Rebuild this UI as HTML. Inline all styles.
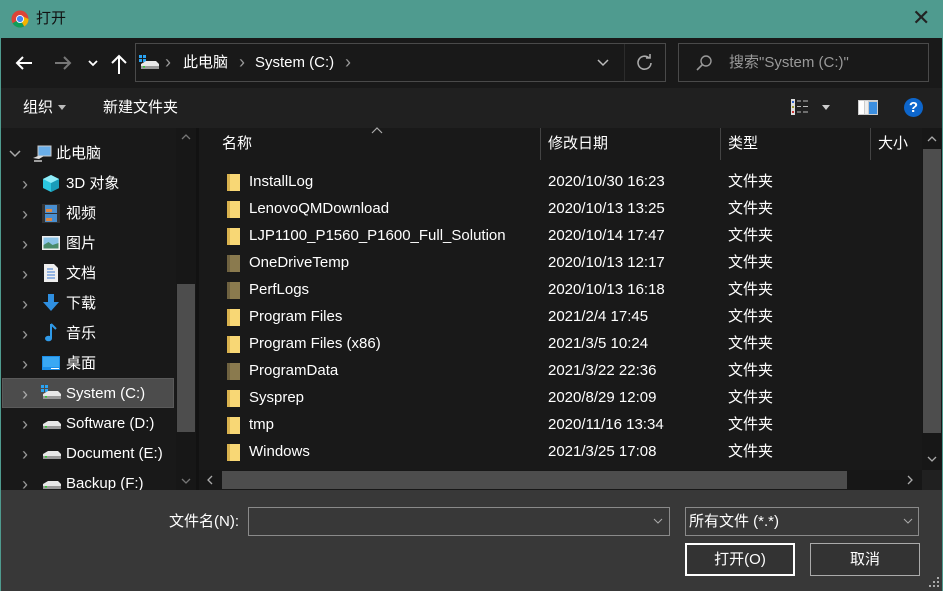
<!DOCTYPE html>
<html><head><meta charset="utf-8"><style>
*{margin:0;padding:0;box-sizing:border-box}
body{width:943px;height:591px;overflow:hidden;background:#191919;font-family:"Liberation Sans","Noto Sans CJK SC",sans-serif;color:#fff;font-size:15px;position:relative}
.a{position:absolute;white-space:nowrap}
.t{line-height:22px}
.cv{color:#999;font-size:18px;line-height:20px}
</style></head><body>
<div class="a" style="left:0;top:0;width:943px;height:38px;background:#4f9b8f"></div>
<div class="a" style="left:0;top:38px;width:1px;height:553px;background:#4f9b8f"></div>
<div class="a" style="left:942px;top:38px;width:1px;height:553px;background:#4f9b8f"></div>
<svg class="a" style="left:11px;top:10px" width="18" height="18" viewBox="0 0 18 18"><circle cx="9" cy="9" r="8.5" fill="#db4437"/><path d="M9 9 L1.6 13.2 A8.5 8.5 0 0 0 13.2 16.4Z" fill="#0f9d58"/><path d="M9 9 L13.2 16.4 A8.5 8.5 0 0 0 17.5 9 L9 5Z" fill="#f4b400"/><circle cx="9" cy="9" r="4" fill="#fff"/><circle cx="9" cy="9" r="3.1" fill="#4285f4"/></svg>
<div class="a t" style="left:36px;top:8px;color:#111">打开</div>
<div class="a" style="left:912px;top:6px;font-size:22px;color:#222;line-height:24px">✕</div>

<div class="a" style="left:1px;top:38px;width:941px;height:50px;background:#191919"></div>
<svg class="a" style="left:14px;top:54px" width="20" height="18" viewBox="0 0 20 18"><path d="M18 9H3M9 3L3 9l6 6" stroke="#fff" stroke-width="2" fill="none"/></svg>
<svg class="a" style="left:53px;top:54px" width="20" height="18" viewBox="0 0 20 18"><path d="M2 9h15M11 3l6 6-6 6" stroke="#777" stroke-width="2" fill="none"/></svg>
<svg class="a" style="left:88px;top:59px" width="10" height="8" viewBox="0 0 10 8"><path d="M1 2l4 4 4-4" stroke="#fff" stroke-width="1.8" fill="none"/></svg>
<svg class="a" style="left:110px;top:53px" width="18" height="22" viewBox="0 0 18 22"><path d="M9 21V3M2 10l7-7 7 7" stroke="#fff" stroke-width="2" fill="none"/></svg>
<div class="a" style="left:135px;top:43px;width:531px;height:39px;border:1px solid #4a4a4a"></div>
<div class="a" style="left:624px;top:44px;width:1px;height:37px;background:#2c2c2c"></div>
<svg class="a" style="left:138px;top:54px" width="22" height="18" viewBox="0 0 22 18"><rect x="1" y="1" width="3" height="3" fill="#2aa4f4"/><rect x="5" y="1" width="3" height="3" fill="#2aa4f4"/><rect x="1" y="5" width="3" height="3" fill="#2aa4f4"/><rect x="5" y="5" width="3" height="3" fill="#2aa4f4"/><path d="M3 10l5-3h10l3 3v4H3z" fill="#e8e8e8"/><rect x="3" y="12" width="18" height="3" fill="#999"/><rect x="5" y="12" width="2" height="1.5" fill="#3c3"/></svg>
<div class="a cv" style="left:165px;top:52px">›</div>
<div class="a t" style="left:183px;top:52px">此电脑</div>
<div class="a cv" style="left:239px;top:52px">›</div>
<div class="a t" style="left:255px;top:52px">System (C:)</div>
<div class="a cv" style="left:345px;top:52px">›</div>
<svg class="a" style="left:597px;top:59px" width="12" height="8" viewBox="0 0 12 8"><path d="M1 1l5 5 5-5" stroke="#bbb" stroke-width="1.5" fill="none"/></svg>
<svg class="a" style="left:636px;top:54px" width="18" height="18" viewBox="0 0 18 18"><path d="M13 4A6.5 6.5 0 1 0 15 9" stroke="#aaa" stroke-width="1.6" fill="none"/><path d="M10 4h4V0" stroke="#aaa" stroke-width="1.6" fill="none"/></svg>
<div class="a" style="left:678px;top:43px;width:251px;height:39px;border:1px solid #4a4a4a"></div>
<svg class="a" style="left:695px;top:54px" width="18" height="18" viewBox="0 0 18 18"><circle cx="11" cy="7" r="5" stroke="#999" stroke-width="1.4" fill="none"/><path d="M7.5 10.5L2 16" stroke="#999" stroke-width="1.6"/></svg>
<div class="a t" style="left:729px;top:52px;color:#999">搜索"System (C:)"</div>

<div class="a" style="left:1px;top:88px;width:941px;height:40px;background:#202020"></div>
<div class="a t" style="left:23px;top:97px">组织</div>
<div class="a" style="left:58px;top:105px;border:4px solid transparent;border-top:5px solid #bbb"></div>
<div class="a t" style="left:103px;top:97px">新建文件夹</div>
<svg class="a" style="left:791px;top:99px" width="20" height="16" viewBox="0 0 20 16"><rect x="0" y="0" width="4" height="16" fill="#ddd"/><rect x="1" y="2" width="2" height="2" fill="#36c"/><rect x="1" y="7" width="2" height="2" fill="#993"/><rect x="1" y="12" width="2" height="2" fill="#c33"/><path d="M6 2h4M12 2h5M6 7.5h4M12 7.5h5M6 13h4M12 13h5" stroke="#bbb" stroke-width="1"/></svg>
<div class="a" style="left:822px;top:105px;border:4px solid transparent;border-top:5px solid #ccc"></div>
<svg class="a" style="left:858px;top:100px" width="20" height="15" viewBox="0 0 20 15"><rect x="0" y="0" width="20" height="15" fill="#ccc"/><rect x="1" y="1" width="5" height="13" fill="#fff"/><rect x="7" y="1" width="3" height="13" fill="#eee"/><rect x="11" y="2" width="8" height="12" fill="#3c8fe0"/></svg>
<div class="a" style="left:904px;top:98px;width:19px;height:19px;border-radius:50%;background:#0d66cc;color:#fff;font-weight:bold;font-size:15px;text-align:center;line-height:19px">?</div>

<div class="a" style="left:1px;top:128px;width:195px;height:362px;background:#191919"></div>
<div class="a" style="left:176px;top:128px;width:20px;height:362px;background:#171717"></div>
<svg class="a" style="left:181px;top:133px" width="10" height="7" viewBox="0 0 10 7"><path d="M1 6l4-4 4 4" stroke="#777" stroke-width="1.3" fill="none"/></svg>
<div class="a" style="left:177px;top:284px;width:18px;height:148px;background:#4d4d4d"></div>
<svg class="a" style="left:181px;top:478px" width="10" height="7" viewBox="0 0 10 7"><path d="M1 1l4 4 4-4" stroke="#777" stroke-width="1.3" fill="none"/></svg>
<div class="a" style="left:2px;top:378px;width:172px;height:30px;background:#4c4c4c;border:1px solid #5a5a5a"></div>

<svg class="a" style="left:9px;top:150px" width="12" height="8" viewBox="0 0 12 8"><path d="M1 1l5 5 5-5" stroke="#aaa" stroke-width="1.5" fill="none"/></svg>
<svg class="a" style="left:32px;top:145px" width="20" height="18" viewBox="0 0 20 18"><rect x="6" y="1" width="13" height="10" fill="#6aaee8" stroke="#ccc"/><path d="M1 13l5-2h6l-5 3z" fill="#ddd"/><path d="M2 16h8" stroke="#ccc" stroke-width="1.5"/></svg>
<div class="a t" style="left:56px;top:143px">此电脑</div>

<div style="position:absolute;left:0;top:168px">
<div class="a cv" style="left:22px;top:6px">›</div>
<svg class="a" style="left:42px;top:6px" width="18" height="19" viewBox="0 0 18 19"><path d="M9 1l8 4v9l-8 4-8-4V5z" fill="#2bc6e0"/><path d="M9 9l8-4v9l-8 4z" fill="#1a9cb8"/><path d="M9 1l8 4-8 4-8-4z" fill="#8fecf8"/></svg>
<div class="a t" style="left:66px;top:5px">3D 对象</div>
</div>
<div style="position:absolute;left:0;top:198px">
<div class="a cv" style="left:22px;top:6px">›</div>
<svg class="a" style="left:42px;top:6px" width="18" height="19" viewBox="0 0 18 19"><rect x="0" y="0" width="18" height="19" fill="#333"/><rect x="3" y="1" width="12" height="8" fill="#4a8fd0"/><rect x="3" y="10" width="12" height="8" fill="#4a8fd0"/><rect x="4" y="5" width="6" height="3" fill="#d84"/><rect x="4" y="14" width="6" height="3" fill="#d84"/></svg>
<div class="a t" style="left:66px;top:5px">视频</div>
</div>
<div style="position:absolute;left:0;top:228px">
<div class="a cv" style="left:22px;top:6px">›</div>
<svg class="a" style="left:42px;top:8px" width="18" height="14" viewBox="0 0 18 14"><rect x="0" y="0" width="18" height="14" fill="#eee"/><rect x="1.5" y="1.5" width="15" height="11" fill="#8cc4e8"/><path d="M1.5 9l5-3 4 3 6-2v5.5h-15z" fill="#4a8a6a"/></svg>
<div class="a t" style="left:66px;top:5px">图片</div>
</div>
<div style="position:absolute;left:0;top:258px">
<div class="a cv" style="left:22px;top:6px">›</div>
<svg class="a" style="left:44px;top:6px" width="14" height="18" viewBox="0 0 14 18"><path d="M0 0h10l4 4v14H0z" fill="#eee"/><path d="M3 5h6M3 8h8M3 11h8M3 14h8" stroke="#3a7bd5" stroke-width="1"/></svg>
<div class="a t" style="left:66px;top:5px">文档</div>
</div>
<div style="position:absolute;left:0;top:288px">
<div class="a cv" style="left:22px;top:6px">›</div>
<svg class="a" style="left:42px;top:6px" width="18" height="18" viewBox="0 0 18 18"><path d="M6 0h6v8h5l-8 9-8-9h5z" fill="#2f8fe0"/></svg>
<div class="a t" style="left:66px;top:5px">下载</div>
</div>
<div style="position:absolute;left:0;top:318px">
<div class="a cv" style="left:22px;top:6px">›</div>
<svg class="a" style="left:44px;top:5px" width="14" height="20" viewBox="0 0 14 20"><path d="M7 1v14" stroke="#2f9ae8" stroke-width="2"/><ellipse cx="4.5" cy="15.5" rx="3.5" ry="2.8" fill="#2f9ae8"/><path d="M7 1l5 5" stroke="#2f9ae8" stroke-width="2"/></svg>
<div class="a t" style="left:66px;top:5px">音乐</div>
</div>
<div style="position:absolute;left:0;top:348px">
<div class="a cv" style="left:22px;top:6px">›</div>
<svg class="a" style="left:42px;top:8px" width="18" height="14" viewBox="0 0 18 14"><rect x="0" y="0" width="18" height="14" fill="#1c8ee8"/><rect x="1" y="1" width="16" height="10" fill="#3aa8f4"/><path d="M9 12.5h8" stroke="#fff" stroke-width="1"/></svg>
<div class="a t" style="left:66px;top:5px">桌面</div>
</div>
<div style="position:absolute;left:0;top:378px">
<div class="a cv" style="left:22px;top:6px;color:#aaa">›</div>
<svg class="a" style="left:40px;top:6px" width="22" height="18" viewBox="0 0 22 18"><rect x="1" y="1" width="3" height="3" fill="#2aa4f4"/><rect x="5" y="1" width="3" height="3" fill="#2aa4f4"/><rect x="1" y="5" width="3" height="3" fill="#2aa4f4"/><rect x="5" y="5" width="3" height="3" fill="#2aa4f4"/><path d="M3 10l5-3h10l3 3v4H3z" fill="#e8e8e8"/><rect x="3" y="12" width="18" height="3" fill="#999"/><rect x="5" y="12" width="2" height="1.5" fill="#3c3"/></svg>
<div class="a t" style="left:66px;top:5px">System (C:)</div>
</div>
<div style="position:absolute;left:0;top:408px">
<div class="a cv" style="left:22px;top:6px">›</div>
<svg class="a" style="left:40px;top:6px" width="22" height="18" viewBox="0 0 22 18"><path d="M3 10l5-3h10l3 3v4H3z" fill="#e8e8e8"/><rect x="3" y="12" width="18" height="3" fill="#999"/><rect x="5" y="12" width="2" height="1.5" fill="#3c3"/></svg>
<div class="a t" style="left:66px;top:5px">Software (D:)</div>
</div>
<div style="position:absolute;left:0;top:438px">
<div class="a cv" style="left:22px;top:6px">›</div>
<svg class="a" style="left:40px;top:6px" width="22" height="18" viewBox="0 0 22 18"><path d="M3 10l5-3h10l3 3v4H3z" fill="#e8e8e8"/><rect x="3" y="12" width="18" height="3" fill="#999"/><rect x="5" y="12" width="2" height="1.5" fill="#3c3"/></svg>
<div class="a t" style="left:66px;top:5px">Document (E:)</div>
</div>
<div style="position:absolute;left:0;top:468px">
<div class="a cv" style="left:22px;top:6px">›</div>
<svg class="a" style="left:40px;top:6px" width="22" height="18" viewBox="0 0 22 18"><path d="M3 10l5-3h10l3 3v4H3z" fill="#e8e8e8"/><rect x="3" y="12" width="18" height="3" fill="#999"/><rect x="5" y="12" width="2" height="1.5" fill="#3c3"/></svg>
<div class="a t" style="left:66px;top:5px">Backup (F:)</div>
</div>

<div class="a" style="left:196px;top:128px;width:3px;height:362px;background:#121212"></div>
<svg class="a" style="left:371px;top:127px" width="12" height="7" viewBox="0 0 12 7"><path d="M1 6l5-5 5 5" stroke="#aaa" stroke-width="1.2" fill="none"/></svg>
<div class="a t" style="left:222px;top:133px">名称</div>
<div class="a" style="left:540px;top:128px;width:1px;height:32px;background:#444"></div>
<div class="a t" style="left:548px;top:133px">修改日期</div>
<div class="a" style="left:720px;top:128px;width:1px;height:32px;background:#444"></div>
<div class="a t" style="left:728px;top:133px">类型</div>
<div class="a" style="left:870px;top:128px;width:1px;height:32px;background:#444"></div>
<div class="a t" style="left:878px;top:133px">大小</div>

<div class="a" style="left:922px;top:128px;width:20px;height:342px;background:#171717"></div>
<svg class="a" style="left:927px;top:135px" width="10" height="7" viewBox="0 0 10 7"><path d="M1 6l4-4 4 4" stroke="#aaa" stroke-width="1.3" fill="none"/></svg>
<div class="a" style="left:923px;top:149px;width:18px;height:284px;background:#4d4d4d"></div>
<svg class="a" style="left:927px;top:456px" width="10" height="7" viewBox="0 0 10 7"><path d="M1 1l4 4 4-4" stroke="#aaa" stroke-width="1.3" fill="none"/></svg>
<div class="a" style="left:199px;top:470px;width:723px;height:20px;background:#171717"></div>
<div class="a" style="left:922px;top:470px;width:20px;height:20px;background:#202020"></div>
<svg class="a" style="left:206px;top:475px" width="7" height="10" viewBox="0 0 7 10"><path d="M6 1L2 5l4 4" stroke="#aaa" stroke-width="1.3" fill="none"/></svg>
<div class="a" style="left:222px;top:471px;width:625px;height:18px;background:#4d4d4d"></div>
<svg class="a" style="left:907px;top:475px" width="7" height="10" viewBox="0 0 7 10"><path d="M1 1l4 4-4 4" stroke="#aaa" stroke-width="1.3" fill="none"/></svg>

<div style="position:absolute;left:0;top:0">
<div class="a" style="left:227px;top:174px;width:13px;height:17px;background:#f8d775;border-left:3px solid #d9b24e"></div><div class="a t" style="left:249px;top:171px">InstallLog</div><div class="a t" style="left:548px;top:171px">2020/10/30 16:23</div><div class="a t" style="left:728px;top:171px">文件夹</div>
<div class="a" style="left:227px;top:201px;width:13px;height:17px;background:#f8d775;border-left:3px solid #d9b24e"></div><div class="a t" style="left:249px;top:198px">LenovoQMDownload</div><div class="a t" style="left:548px;top:198px">2020/10/13 13:25</div><div class="a t" style="left:728px;top:198px">文件夹</div>
<div class="a" style="left:227px;top:228px;width:13px;height:17px;background:#f8d775;border-left:3px solid #d9b24e"></div><div class="a t" style="left:249px;top:225px">LJP1100_P1560_P1600_Full_Solution</div><div class="a t" style="left:548px;top:225px">2020/10/14 17:47</div><div class="a t" style="left:728px;top:225px">文件夹</div>
<div class="a" style="left:227px;top:255px;width:13px;height:17px;background:#8a7a4e;border-left:3px solid #6f6240"></div><div class="a t" style="left:249px;top:252px">OneDriveTemp</div><div class="a t" style="left:548px;top:252px">2020/10/13 12:17</div><div class="a t" style="left:728px;top:252px">文件夹</div>
<div class="a" style="left:227px;top:282px;width:13px;height:17px;background:#8a7a4e;border-left:3px solid #6f6240"></div><div class="a t" style="left:249px;top:279px">PerfLogs</div><div class="a t" style="left:548px;top:279px">2020/10/13 16:18</div><div class="a t" style="left:728px;top:279px">文件夹</div>
<div class="a" style="left:227px;top:309px;width:13px;height:17px;background:#f8d775;border-left:3px solid #d9b24e"></div><div class="a t" style="left:249px;top:306px">Program Files</div><div class="a t" style="left:548px;top:306px">2021/2/4 17:45</div><div class="a t" style="left:728px;top:306px">文件夹</div>
<div class="a" style="left:227px;top:336px;width:13px;height:17px;background:#f8d775;border-left:3px solid #d9b24e"></div><div class="a t" style="left:249px;top:333px">Program Files (x86)</div><div class="a t" style="left:548px;top:333px">2021/3/5 10:24</div><div class="a t" style="left:728px;top:333px">文件夹</div>
<div class="a" style="left:227px;top:363px;width:13px;height:17px;background:#8a7a4e;border-left:3px solid #6f6240"></div><div class="a t" style="left:249px;top:360px">ProgramData</div><div class="a t" style="left:548px;top:360px">2021/3/22 22:36</div><div class="a t" style="left:728px;top:360px">文件夹</div>
<div class="a" style="left:227px;top:390px;width:13px;height:17px;background:#f8d775;border-left:3px solid #d9b24e"></div><div class="a t" style="left:249px;top:387px">Sysprep</div><div class="a t" style="left:548px;top:387px">2020/8/29 12:09</div><div class="a t" style="left:728px;top:387px">文件夹</div>
<div class="a" style="left:227px;top:417px;width:13px;height:17px;background:#f8d775;border-left:3px solid #d9b24e"></div><div class="a t" style="left:249px;top:414px">tmp</div><div class="a t" style="left:548px;top:414px">2020/11/16 13:34</div><div class="a t" style="left:728px;top:414px">文件夹</div>
<div class="a" style="left:227px;top:444px;width:13px;height:17px;background:#f8d775;border-left:3px solid #d9b24e"></div><div class="a t" style="left:249px;top:441px">Windows</div><div class="a t" style="left:548px;top:441px">2021/3/25 17:08</div><div class="a t" style="left:728px;top:441px">文件夹</div>
</div>

<div class="a" style="left:1px;top:490px;width:941px;height:101px;background:#383838"></div>
<div class="a t" style="left:169px;top:511px">文件名(N):</div>
<div class="a" style="left:248px;top:507px;width:422px;height:29px;border:1px solid #8a8a8a"></div>
<svg class="a" style="left:653px;top:518px" width="10" height="6" viewBox="0 0 10 6"><path d="M1 1l4 4 4-4" stroke="#aaa" stroke-width="1" fill="none"/></svg>
<div class="a" style="left:685px;top:507px;width:234px;height:29px;border:1px solid #8a8a8a"></div>
<div class="a t" style="left:689px;top:511px">所有文件 (*.*)</div>
<svg class="a" style="left:903px;top:518px" width="10" height="6" viewBox="0 0 10 6"><path d="M1 1l4 4 4-4" stroke="#aaa" stroke-width="1" fill="none"/></svg>
<div class="a" style="left:685px;top:543px;width:110px;height:33px;border:2px solid #fff;background:#333;text-align:center;line-height:30px">打开(O)</div>
<div class="a" style="left:810px;top:543px;width:110px;height:33px;border:1px solid #aaa;background:#333;text-align:center;line-height:32px">取消</div>
<svg class="a" style="left:929px;top:577px" width="12" height="12" viewBox="0 0 12 12" fill="#aaa"><rect x="8" y="0" width="2" height="2"/><rect x="4" y="4" width="2" height="2"/><rect x="8" y="4" width="2" height="2"/><rect x="0" y="8" width="2" height="2"/><rect x="4" y="8" width="2" height="2"/><rect x="8" y="8" width="2" height="2"/></svg>
</body></html>
